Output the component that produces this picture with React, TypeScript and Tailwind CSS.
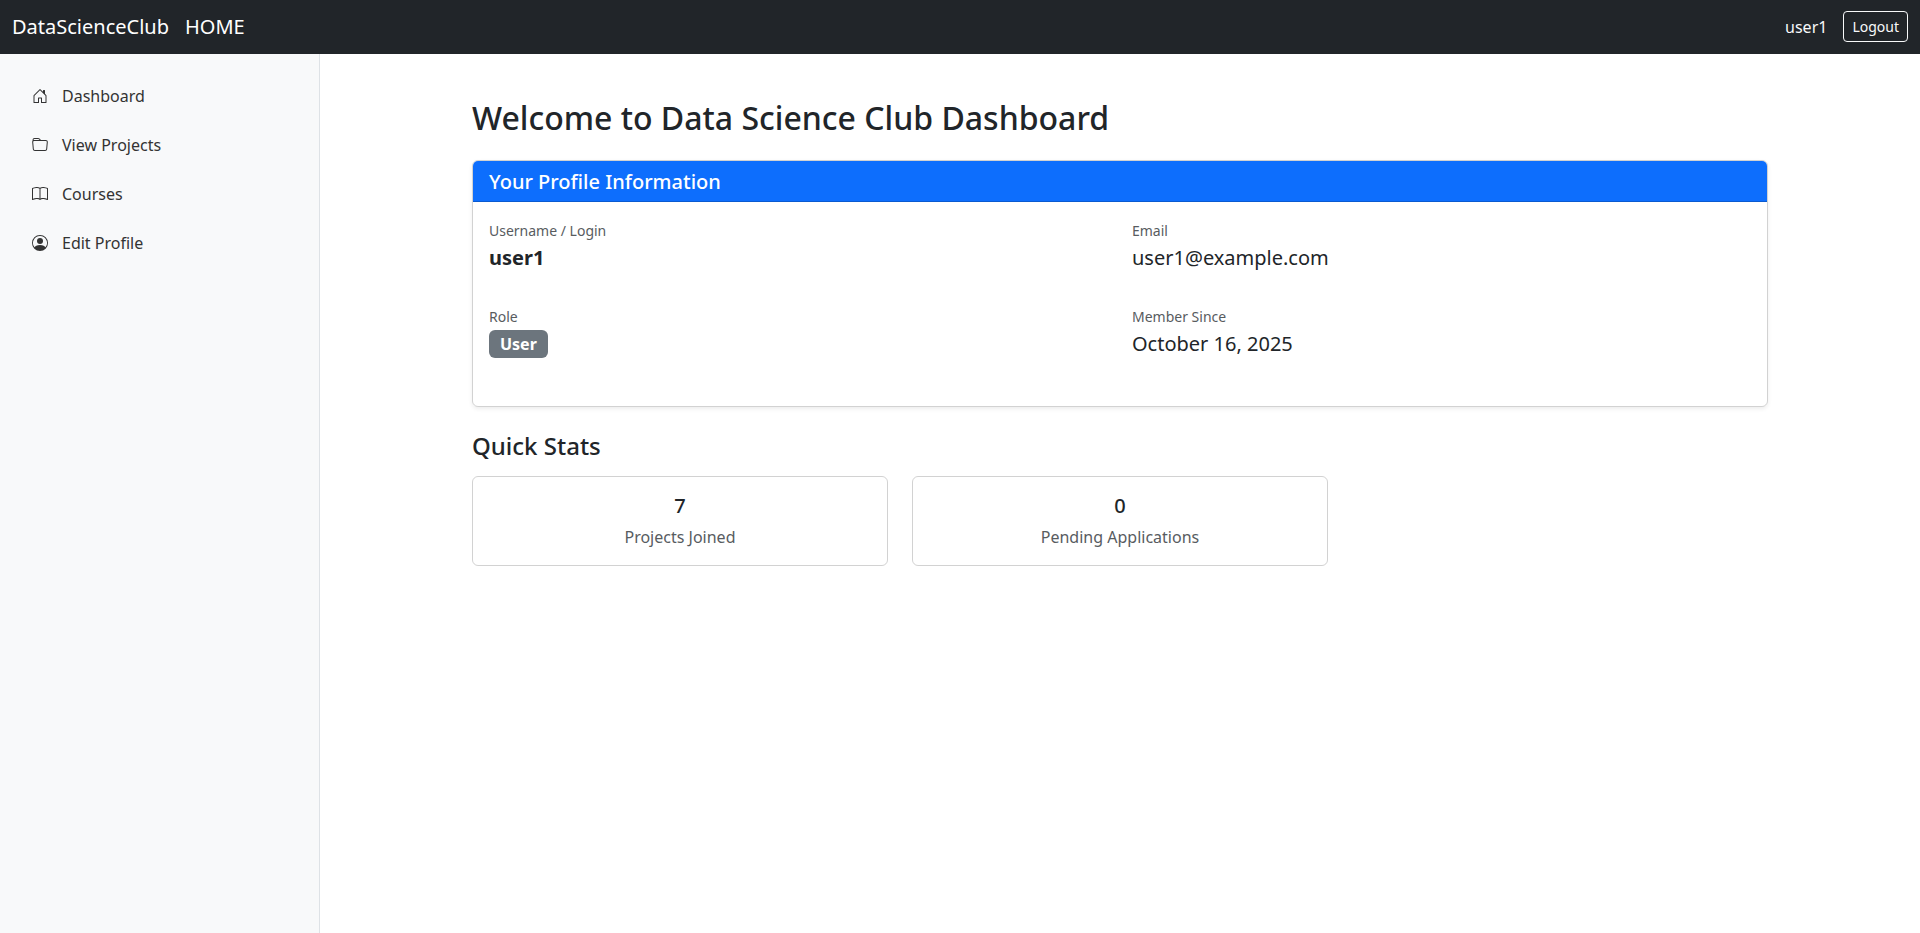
import type { ReactNode } from "react";
import { BsHouseDoor, BsFolder, BsBook, BsPersonCircle } from "react-icons/bs";

const links: { label: string; icon: ReactNode }[] = [
  { label: "Dashboard", icon: <BsHouseDoor /> },
  { label: "View Projects", icon: <BsFolder /> },
  { label: "Courses", icon: <BsBook /> },
  { label: "Edit Profile", icon: <BsPersonCircle /> },
];

function Field({ label, children }: { label: string; children: ReactNode }) {
  return (
    <div className="mb-4">
      <dt className="text-sm leading-[26px] text-[#585c5f]">{label}</dt>
      <dd className="mb-4 text-xl leading-7">{children}</dd>
    </div>
  );
}

function Stat({ value, label }: { value: string; label: string }) {
  return (
    <div className="rounded-md border border-black/17.5 p-4 text-center">
      <h5 className="mb-1.5 text-xl leading-[26px] font-medium">{value}</h5>
      <p className="text-base text-[#585c5f]">{label}</p>
    </div>
  );
}

export default function App() {
  return (
    <div className="flex min-h-screen flex-col bg-white font-['Noto_Sans',sans-serif] text-base text-[#212529]">
      <nav className="flex items-center justify-between bg-[#212529] px-3 py-2 text-white">
        <div className="flex items-center gap-4 text-xl leading-[38px]">
          <a href="#">DataScienceClub</a>
          <a href="#">HOME</a>
        </div>
        <div className="flex items-center gap-4 pb-px">
          <span className="text-[#f8f9fa]">user1</span>
          <button className="rounded border border-[#f8f9fa] px-2 py-1 text-sm leading-[21px] text-[#f8f9fa]">Logout</button>
        </div>
      </nav>
      <div className="flex grow">
        <aside className="w-1/6 shrink-0 border-r border-[#dee2e6] bg-[#f8f9fa] px-4 pt-[22px] text-[#333333]">
          <ul className="flex flex-col gap-[9px]">
            {links.map((l) => (
              <li key={l.label}>
                <a href="#" className="flex items-center gap-[14px] px-4 py-2">
                  {l.icon}
                  {l.label}
                </a>
              </li>
            ))}
          </ul>
        </aside>
        <main className="grow px-6 pt-11">
          <div className="mx-auto max-w-[1296px]">
            <h2 className="mb-[22px] text-[32px] leading-10 font-medium">Welcome to Data Science Club Dashboard</h2>
            <section className="mb-6 rounded-md border border-black/17.5 shadow-[0_2px_4px_rgba(0,0,0,0.075)]">
              <h5 className="rounded-t-[5px] border-b border-black/17.5 bg-[#0d6efd] px-4 pt-2 pb-1.5 text-xl leading-[26px] font-medium text-white">
                Your Profile Information
              </h5>
              <dl className="grid grid-cols-2 gap-x-6 p-4">
                <Field label="Username / Login">
                  <strong className="font-bold">user1</strong>
                </Field>
                <Field label="Email">user1@example.com</Field>
                <Field label="Role">
                  <span className="block w-fit rounded-md bg-[#6c757d] px-[11px] py-[6px] text-base leading-4 font-bold text-white">
                    User
                  </span>
                </Field>
                <Field label="Member Since">October 16, 2025</Field>
              </dl>
            </section>
            <h4 className="mb-4 text-2xl leading-[29px] font-medium">Quick Stats</h4>
            <div className="grid grid-cols-3 gap-6">
              <Stat value="7" label="Projects Joined" />
              <Stat value="0" label="Pending Applications" />
            </div>
          </div>
        </main>
      </div>
    </div>
  );
}
